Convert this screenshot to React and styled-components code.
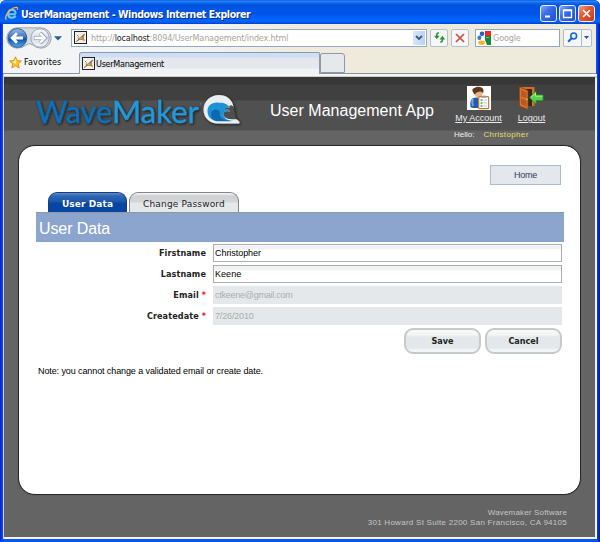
import React from "react";
import styled, { createGlobalStyle } from "styled-components";

const Global = createGlobalStyle`
  * { box-sizing: border-box; }
  body { margin: 0; background: #fff; overflow: hidden; }
  svg { display: block; flex: none; }
`;

const verdana = `"DejaVu Sans", Verdana, sans-serif`;
const tahoma = `"DejaVu Sans Condensed", "DejaVu Sans", Tahoma, sans-serif`;
const arial = `"Liberation Sans", Arial, sans-serif`;

const Label = styled.span`
  display: block;
  flex: none;
  white-space: nowrap;
  font-family: ${(p) => p.$font || arial};
  font-size: ${(p) => p.$size || 9}px;
  line-height: ${(p) => p.$line || 12}px;
  font-weight: ${(p) => (p.$bold ? 700 : 400)};
  letter-spacing: ${(p) => p.$track || 0}px;
  color: ${(p) => p.$color || "#000"};
`;

const Window = styled.div`
  width: 600px;
  height: 542px;
  display: flex;
  flex-direction: column;
  overflow: hidden;
  border-radius: 6px 6px 0 0;
  background: linear-gradient(90deg, #0019cf 0, #0831d9 1px, #0855f0 3px, #0855f0 597px, #0030d8 598px, #001ca0 600px);
`;

const TitleBar = styled.header`
  height: 24px;
  flex: none;
  display: flex;
  align-items: center;
  padding: 3px 5px 0 4px;
  background: linear-gradient(#0846c8 0, #2f8cf8 1px, #0866ee 3px, #0054e3 5px, #0055e8 14px, #0066ff 20px, #0062f4 22px, #003dd0 24px);
`;

const TitleText = styled(Label)`
  margin: 0 auto 0 2px;
  text-shadow: 1px 1px 0 #0b2c86;
`;

const WindowButtons = styled.div`
  display: flex;
  gap: 2px;
`;

const WindowButton = styled.div`
  width: 17px;
  height: 17px;
  display: grid;
  place-items: center;
  border: 1px solid #e6edfb;
  border-radius: 3px;
  background: ${(p) =>
    p.$close
      ? "linear-gradient(135deg, #f0a088, #e25b36 40%, #c83a14)"
      : "linear-gradient(135deg, #86a8f8, #3a6cec 40%, #1d4ed4)"};
`;

const Chrome = styled.div`
  height: 50px;
  flex: none;
  margin: 0 4px 0 3px;
  border-bottom: 1px solid #8593a6;
  background: linear-gradient(90deg, #f3f4f6 0, #f3f4f6 170px, #efebdc 300px, #efebdc);
`;

const AddressRow = styled.div`
  height: 27px;
  padding: 4px 4px 4px 3px;
  display: flex;
  align-items: center;
`;

const AddressField = styled.div`
  width: 356px;
  height: 18px;
  margin-left: 7px;
  display: flex;
  align-items: center;
  gap: 4px;
  padding-left: 2px;
  border: 1px solid #93a8c2;
  background: #fff;
`;

const Host = styled.span`
  color: #222;
`;

const DropButton = styled.div`
  width: 12px;
  height: 14px;
  margin: 0 1px 0 auto;
  display: grid;
  place-items: center;
  background: linear-gradient(90deg, #d8e6fb, #b9d2f8);
`;

const ToolButton = styled.div`
  width: 18px;
  height: 18px;
  margin-left: 3px;
  display: grid;
  place-items: center;
  border: 1px solid #b9bfc6;
  border-radius: 2px;
  background: #f4f6f8;
`;

const SearchField = styled.div`
  width: 85px;
  height: 18px;
  margin-left: 6px;
  display: flex;
  align-items: center;
  gap: 2px;
  padding-left: 1px;
  border: 1px solid #93a8c2;
  background: #fff;
`;

const SearchButton = styled.div`
  width: 29px;
  height: 18px;
  margin-left: 3px;
  display: grid;
  grid-template-columns: 17px 10px;
  border: 1px solid #b0bccb;
  border-radius: 2px;
  background: #f4f6f8;
  & > div { display: grid; place-items: center; }
  & > div + div { border-left: 1px solid #b0bccb; }
`;

const TabRow = styled.div`
  height: 21px;
  margin-top: 1px;
  display: flex;
`;

const Favorites = styled.div`
  width: 76px;
  height: 22px;
  display: flex;
  align-items: center;
  gap: 2px;
  padding: 0 0 2px 6px;
`;

const BrowserTab = styled.div`
  width: 241px;
  height: 22px;
  display: flex;
  align-items: center;
  gap: 1px;
  padding-left: 2px;
  border: 1px solid #8e99a8;
  border-bottom: 0;
  border-radius: 3px 2px 0 0;
  background: linear-gradient(#cddff8 0, #cddff8 4px, #e4e8ec 5px, #e4e8ec 15px, #f2f3f5 16px);
`;

const NewTab = styled.div`
  width: 25px;
  height: 20px;
  margin-top: 1px;
  border: 1px solid #8e99a8;
  border-radius: 2px 3px 0 0;
  background: #e5e9ec;
`;

const Viewport = styled.main`
  height: 465px;
  flex: none;
  margin: 0 3px;
  padding: 3px 2px 2px 0;
  border-left: 1px solid #d5d5cc;
  background: linear-gradient(#f4f5f6 0, #f4f5f6 2px, #a9a88f 3px, #f4f1e6 4px);
`;

const AppPage = styled.div`
  height: 460px;
  display: flex;
  flex-direction: column;
  background: linear-gradient(#373737 0, #373737 7px, #404040 8px, #404040 23px, #505050 24px, #505050 53px, #646464 54px);
`;

const Banner = styled.div`
  height: 68px;
  flex: none;
  display: grid;
  grid-template-columns: 266px 178px 61px 45px;
  grid-template-rows: 52px 16px;
`;

const LogoLink = styled.div`
  padding: 14px 0 0 28px;
`;

const BrandText = styled.text`
  font-family: Lato, sans-serif;
  font-size: 31px;
  font-weight: 400;
  stroke-width: 0.3px;
`;

const AppTitle = styled(Label)`
  padding-top: 24px;
`;

const Shortcut = styled.div`
  display: flex;
  flex-direction: column;
  align-items: center;
  padding-top: 9px;
`;

const ShortcutText = styled(Label)`
  margin-top: 2px;
  text-decoration: underline;
`;

const Greeting = styled.div`
  grid-column: 3 / 5;
  grid-row: 2;
  display: flex;
  gap: 9px;
  padding-left: 6px;
`;

const Card = styled.section`
  width: 563px;
  height: 350px;
  flex: none;
  margin: 0 0 0 14px;
  padding: 19px 16px 0 17px;
  display: flex;
  flex-direction: column;
  border: 1px solid #282828;
  border-radius: 17px;
  background: #fff;
  box-shadow: 0 0 1px 0 #333;
`;

const HomeButton = styled.button`
  width: 71px;
  height: 20px;
  flex: none;
  align-self: flex-end;
  margin-right: 3px;
  padding: 0;
  display: grid;
  place-items: center;
  border: 1px solid #abbcd6;
  background: #e4e8ec;
`;

const Tabs = styled.nav`
  height: 20px;
  flex: none;
  margin-top: 7px;
  padding-left: 12px;
  display: flex;
  gap: 2px;
`;

const Tab = styled.div`
  width: ${(p) => (p.$active ? 79 : 110)}px;
  height: 21px;
  display: grid;
  place-items: center;
  padding-top: 2px;
  border: 1px solid ${(p) => (p.$active ? "#173d80" : "#858585")};
  border-bottom: 0;
  border-radius: 9px 9px 0 0;
  background: ${(p) =>
    p.$active
      ? "linear-gradient(#5f8bc8 0, #2e66b5 3px, #1a55aa 9px, #0745a2 10px, #0745a2)"
      : "linear-gradient(#fafafa 0, #cfd1d2 3px, #d4d6d7 9px, #e5e8ea 10px, #e5e8ea)"};
`;

const Heading = styled.div`
  height: 30px;
  flex: none;
  padding: 6px 0 0 3px;
  border-top: 1px solid #8e969f;
  background: #8ba5ce;
`;

const Form = styled.form`
  flex: none;
  padding: 2px 3px 0 0;
  display: grid;
  grid-auto-rows: 18px;
  row-gap: 3px;
`;

const FormRow = styled.div`
  display: grid;
  grid-template-columns: 170px 349px;
  column-gap: 7px;
`;

const RowLabel = styled(Label)`
  text-align: right;
`;

const Required = styled.span`
  margin-left: 3px;
  letter-spacing: 0;
  color: #f01818;
`;

const Field = styled.div`
  height: 18px;
  padding-left: ${(p) => (p.$disabled ? 2 : 1)}px;
  border: ${(p) => (p.$disabled ? "0" : "1px solid #adadad")};
  background: ${(p) => (p.$disabled ? "#e4e8ea" : "linear-gradient(#f1f2f4 0, #f1f2f4 4px, #fff 5px)")};
`;

const Actions = styled.div`
  flex: none;
  display: flex;
  justify-content: flex-end;
  gap: 4px;
  padding: 3px 2px 0 0;
`;

const PillButton = styled.button`
  width: 77px;
  height: 26px;
  padding: 0 0 1px;
  display: grid;
  place-items: center;
  border: 2px solid #c6cac8;
  border-radius: 9px;
  background: linear-gradient(#f8f9f9 0, #f3f4f5 5px, #e4e8ea 7px, #e4e8ea 18px, #f5f6f7 20px);
`;

const Note = styled(Label)`
  margin: 11px 0 0 2px;
`;

const Footer = styled.footer`
  padding: 12px 28px 0 0;
  display: flex;
  flex-direction: column;
  align-items: flex-end;
`;

const IeIcon = () => (
  <svg width="15" height="15" viewBox="0 0 15 15" fill="none">
    <path d="M11.8 8.3H4.3M11.8 7.6C11.5 4.9 9.9 3.8 7.9 3.8C5.6 3.8 4.1 5.5 4.1 7.8C4.1 10.3 5.6 11.8 7.9 11.8C9.6 11.8 10.9 11.1 11.6 9.9" stroke="#74c5f7" strokeWidth="2.1" />
    <path d="M2.5 13.5C-.3 12.2 4.1 4.5 9.4 2C12 .8 14.4 1 13.2 3.8" stroke="#f3ba39" strokeWidth="1.3" />
  </svg>
);

const NavButtons = () => (
  <svg width="58" height="22" viewBox="0 0 58 22">
    <defs>
      <linearGradient id="back" x2="0" y2="1">
        <stop stopColor="#9dbbe6" /><stop offset=".45" stopColor="#3c76c6" /><stop offset=".55" stopColor="#0d4ea9" /><stop offset="1" stopColor="#4db1ee" />
      </linearGradient>
      <linearGradient id="forward" x2="0" y2="1">
        <stop stopColor="#fff" /><stop offset=".5" stopColor="#d3dbe8" /><stop offset="1" stopColor="#f4f6f8" />
      </linearGradient>
    </defs>
    <path d="M11 .8H35A10.2 10.2 0 0 1 35 21.2Q30 21 27 18Q23 15 20 18Q17 21 11 21.2A10.2 10.2 0 0 1 11 .8Z" fill="#d7dade" stroke="#a3a6aa" />
    <circle cx="11.4" cy="11" r="9.4" fill="url(#back)" stroke="#356298" />
    <circle cx="34" cy="11" r="9.2" fill="url(#forward)" stroke="#9aa8bc" />
    <path d="M17 11H7M11 6.2L6.2 11L11 15.8" fill="none" stroke="#fff" strokeWidth="2.8" />
    <path d="M28 11H38M34 6L39 11L34 16" fill="none" stroke="#9aa7bb" strokeWidth="4" />
    <path d="M28.500 11H38M34.200 6.500L38.700 11L34.200 15.500" fill="none" stroke="#fff" strokeWidth="2.400" />
    <path d="M48 9.3H56L52 13.6Z" fill="#1d6299" />
  </svg>
);

const SiteIcon = () => (
  <svg width="13" height="13" viewBox="0 0 13 13">
    <rect x=".5" y=".5" width="12" height="12" fill="#f3f0e8" stroke="#222" />
    <path d="M2 10.500L4.200 8L3.300 6.300L5.500 6.800L7.300 5.300L11 2.300L9.800 6.800L11 10.300L8.200 8.900L5 9Z" fill="#b08a55" />
    <path d="M2.200 10.600L5.500 8.200M3 4L4.600 5.500M8 6L10.600 3" stroke="#666" strokeWidth=".9" />
    <path d="M5 8L7.4 6.5L8 8Z" fill="#e9b655" />
  </svg>
);

const StarIcon = () => (
  <svg width="13" height="13" viewBox="0 0 13 13">
    <path d="M6.5 .8L8.2 4.6L12.4 5L9.3 7.8L10.2 12L6.5 9.8L2.8 12L3.7 7.8L.6 5L4.8 4.6Z" fill="#fcc325" stroke="#e38a1a" strokeWidth=".9" />
    <path d="M6.5 2.5L7.4 5.3L6.5 8L3 5.7L5.3 5.4Z" fill="#fff09a" />
  </svg>
);

const RefreshIcon = () => (
  <svg width="13" height="13" viewBox="0 0 13 13" fill="none">
    <path d="M6 2C4 1.8 3.8 3 3.8 5M7.2 11C9.2 11.2 9.4 10 9.4 8" stroke="#2c9634" strokeWidth="1.7" />
    <path d="M1 4.7H6.6L3.8 8.2ZM6.6 8.4H12.2L9.4 4.8Z" fill="#2c9634" />
  </svg>
);

const StopIcon = () => (
  <svg width="10" height="10" viewBox="0 0 10 10">
    <path d="M1 1L9 9M9 1L1 9" stroke="#cf4b43" strokeWidth="1.7" />
  </svg>
);

const GoogleIcon = () => (
  <svg width="14" height="14" viewBox="0 0 14 14">
    <path d="M7 0H14V5H8Z" fill="#e92b25" />
    <path d="M8 5H14V14H9L6 8Z" fill="#128a39" />
    <path d="M5 0H8L8 9L10 14H7V10L4 8Z" fill="#fff" />
    <ellipse cx="5" cy="2.8" rx="2.3" ry="2.4" fill="#2861bd" />
    <ellipse cx="2.4" cy="6.8" rx="2" ry="2.2" fill="#3c79cc" />
    <ellipse cx="4.5" cy="11.7" rx="3.3" ry="2.1" fill="#f5b523" />
    <rect x="9" y="6" width="3" height="1" fill="#7abf8b" />
  </svg>
);

const SearchIcon = () => (
  <svg width="11" height="11" viewBox="0 0 11 11">
    <circle cx="6.7" cy="4" r="2.9" fill="#e2f1ff" stroke="#1c5ed6" strokeWidth="1.5" />
    <path d="M4.5 6.3L1.2 9.8" stroke="#1c5ed6" strokeWidth="2" />
  </svg>
);

const Chevron = () => (
  <svg width="8" height="6" viewBox="0 0 8 6">
    <path d="M1 1L4 4L7 1" fill="none" stroke="#3f5878" strokeWidth="1.8" />
  </svg>
);

const Triangle = () => (
  <svg width="5" height="3" viewBox="0 0 5 3"><path d="M0 0H5L2.5 3Z" fill="#1b57bd" /></svg>
);

const Logo = () => (
  <svg width="210" height="38" viewBox="0 0 210 38">
    <defs>
      <filter id="glow" x="-10%" y="-20%" width="120%" height="140%">
        <feDropShadow dx="1" dy="1" stdDeviation="1.4" floodColor="#111" floodOpacity=".85" />
      </filter>
    </defs>
    <g filter="url(#glow)">
      <BrandText x="4" y="31.5" textLength="76" lengthAdjust="spacingAndGlyphs" fill="#0870b8" stroke="#0870b8">Wave</BrandText>
      <BrandText x="80" y="31.5" textLength="87" lengthAdjust="spacingAndGlyphs" fill="#2197da" stroke="#2197da">Maker</BrandText>
      <path d="M201.5 16C200.5 8.5 194.500 4 187 4C178 4 171.500 10.500 171.500 18.500C171.500 27 177.500 32.300 186 32.500H206.500C208 32.500 208 31 206 29.500L204 28H196Z" fill="#e9eef1" />
      <path d="M175.500 21C175 14 181 10.500 187 11.800C192 11.500 196 13.200 197.500 16.800C194.500 16 192.700 16.500 192 18C195.500 17.500 197.300 18.700 198 20.500C193.500 19.500 190.500 21 191.500 24C192.500 28.500 197 30 204.500 30H187C180 30 176 27 175.500 21Z" fill="#1d93d8" />
      <path d="M179 22C180.500 18.300 184 17.500 187 19.500C188.500 21 187 23.500 188.500 25.500C190.500 29 196 29.800 200 30.300H187C181.500 30.300 178.500 27 179 22Z" fill="#0868b0" />
      <path d="M201.500 15.500C199 13.500 196.500 14 197.500 16.800C194.500 16 192.700 16.500 192 18C195.500 17.500 197.300 18.700 198 20.500C193.500 19.500 190.500 21 191.500 24C192.500 27.500 197 28.500 204 28.200L203 24Z" fill="#505050" />
    </g>
    <circle cx="168.500" cy="13" r=".7" fill="#2197da" />
  </svg>
);

const AccountIcon = () => (
  <svg width="24" height="24" viewBox="0 0 24 24">
    <rect width="24" height="24" fill="#fff" />
    <path d="M3.500 21Q2 12 8.500 11.500L13 12L15 22H7Q4.500 22 3.500 21Z" fill="#225dac" />
    <path d="M6 12.500Q4.500 16 6 20" fill="none" stroke="#6ca5dc" strokeWidth="2" />
    <path d="M7.500 5H15Q16.500 12 11.500 12.500Q7.500 12 7.500 5Z" fill="#e8b486" />
    <path d="M6.500 7Q3.500 2.500 8 1.700Q10 0 13 1Q18 2 16 7.500Q15.500 5.500 13 5.500Q9 6 7.500 8.500Z" fill="#653719" />
    <rect x="11.700" y="10.700" width="10" height="12" rx="1" fill="#fff" stroke="#c07a3a" strokeWidth="1.200" />
    <rect x="14.500" y="9.700" width="4.500" height="2" fill="#999" />
    <path d="M13.500 14H15.500M13.500 17H15.500M13.500 20H15.500" stroke="#55a05c" strokeWidth="1.400" />
    <path d="M16.500 14H20M16.500 17H20M16.500 20H20" stroke="#b9c8d8" />
  </svg>
);

const LogoutIcon = () => (
  <svg width="25" height="24" viewBox="0 0 25 24">
    <path d="M.5 1H15.500V20H12.500V3H3.500V20H.5Z" fill="#d96e22" />
    <path d="M3.500 3H13V20H4Z" fill="#332a26" />
    <path d="M.5 1L9 4.500V23.500L.5 20Z" fill="#d77330" stroke="#823e13" strokeWidth=".7" />
    <path d="M2 4L7.500 6.200V12L2 10.300ZM2 12.500L7.500 14.300V20.500L2 18.200Z" fill="#b9581f" />
    <circle cx="7.900" cy="13.500" r=".8" fill="#f8d060" />
    <path d="M10.500 11.500L17 5.200V9H24V14.500H17V18Z" fill="#5bd04c" stroke="#269426" strokeWidth=".9" />
    <path d="M12 11.200L16.500 7V10.200H23.500" fill="none" stroke="#a4f18d" />
  </svg>
);

const FIELDS = [
  { label: "Firstname", value: "Christopher", track: -0.05 },
  { label: "Lastname", value: "Keene", track: 0.05 },
  { label: "Email", value: "ctkeene@gmail.com", locked: true, track: -0.25 },
  { label: "Createdate", value: "7/26/2010", locked: true, track: -0.15 },
];

export default function App() {
  return (
    <>
      <Global />
      <Window>
        <TitleBar>
          <IeIcon />
          <TitleText $font={tahoma} $size={10.5} $line={18} $bold $color="#fff" $track={-0.43}>UserManagement - Windows Internet Explorer</TitleText>
          <WindowButtons>
            <WindowButton><svg width="11" height="11"><path d="M2 8.500H7" stroke="#fff" strokeWidth="2" /></svg></WindowButton>
            <WindowButton><svg width="11" height="11"><path d="M1.500 2H9.500V9.500H1.500ZM1 2.500H10" fill="none" stroke="#fff" strokeWidth="1.300" /></svg></WindowButton>
            <WindowButton $close><svg width="11" height="11"><path d="M2 2L9 9M9 2L2 9" stroke="#fff" strokeWidth="1.700" /></svg></WindowButton>
          </WindowButtons>
        </TitleBar>
        <Chrome>
          <AddressRow>
            <NavButtons />
            <AddressField>
              <SiteIcon />
              <Label $font={tahoma} $size={9} $track={-0.16} $color="#a9a59a">http://<Host>localhost</Host>:8094/UserManagement/index.html</Label>
              <DropButton><Chevron /></DropButton>
            </AddressField>
            <ToolButton><RefreshIcon /></ToolButton>
            <ToolButton><StopIcon /></ToolButton>
            <SearchField>
              <GoogleIcon />
              <Label $font={tahoma} $size={9} $track={-0.15} $color="#aaa69c">Google</Label>
            </SearchField>
            <SearchButton><div><SearchIcon /></div><div><Triangle /></div></SearchButton>
          </AddressRow>
          <TabRow>
            <Favorites><StarIcon /><Label $font={tahoma} $size={9} $track={0.1}>Favorites</Label></Favorites>
            <BrowserTab><SiteIcon /><Label $font={tahoma} $size={9} $track={-0.28}>UserManagement</Label></BrowserTab>
            <NewTab />
          </TabRow>
        </Chrome>
        <Viewport>
          <AppPage>
            <Banner>
              <LogoLink><Logo /></LogoLink>
              <AppTitle $size={16} $line={20} $color="#fff" $track={0.02}>User Management App</AppTitle>
              <Shortcut><AccountIcon /><ShortcutText $color="#ececec">My Account</ShortcutText></Shortcut>
              <Shortcut><LogoutIcon /><ShortcutText $color="#ececec">Logout</ShortcutText></Shortcut>
              <Greeting>
                <Label $size={8} $color="#eee">Hello:</Label>
                <Label $size={8} $track={0.35} $color="#e6dc62">Christopher</Label>
              </Greeting>
            </Banner>
            <Card>
              <HomeButton><Label $track={-0.25} $color="#2b3c66">Home</Label></HomeButton>
              <Tabs>
                <Tab $active><Label $font={verdana} $size={9} $bold $track={0.1} $color="#fff">User Data</Label></Tab>
                <Tab><Label $font={verdana} $size={9} $track={0.17} $color="#222">Change Password</Label></Tab>
              </Tabs>
              <Heading><Label $size={16} $line={20} $track={-0.1} $color="#fff">User Data</Label></Heading>
              <Form>
                {FIELDS.map((f) => (
                  <FormRow key={f.label}>
                    <RowLabel $font={tahoma} $size={9} $line={19} $track={0.1} $bold $color="#222">{f.label}{f.locked && <Required>*</Required>}</RowLabel>
                    <Field $disabled={f.locked}>
                      <Label $line={f.locked ? 19 : 16} $track={f.track} $color={f.locked ? "#a9adae" : "#000"}>{f.value}</Label>
                    </Field>
                  </FormRow>
                ))}
              </Form>
              <Actions>
                <PillButton type="button"><Label $font={tahoma} $size={9} $bold $color="#222">Save</Label></PillButton>
                <PillButton type="button"><Label $font={tahoma} $size={9} $bold $color="#222">Cancel</Label></PillButton>
              </Actions>
              <Note $track={-0.1}>Note: you cannot change a validated email or create date.</Note>
            </Card>
            <Footer>
              <Label $size={8} $line={11} $track={0.17} $color="#c5c5c5">Wavemaker Software</Label>
              <Label $size={8} $line={10} $track={0.27} $color="#c5c5c5">301 Howard St Suite 2200 San Francisco, CA 94105</Label>
            </Footer>
          </AppPage>
        </Viewport>
      </Window>
    </>
  );
}
